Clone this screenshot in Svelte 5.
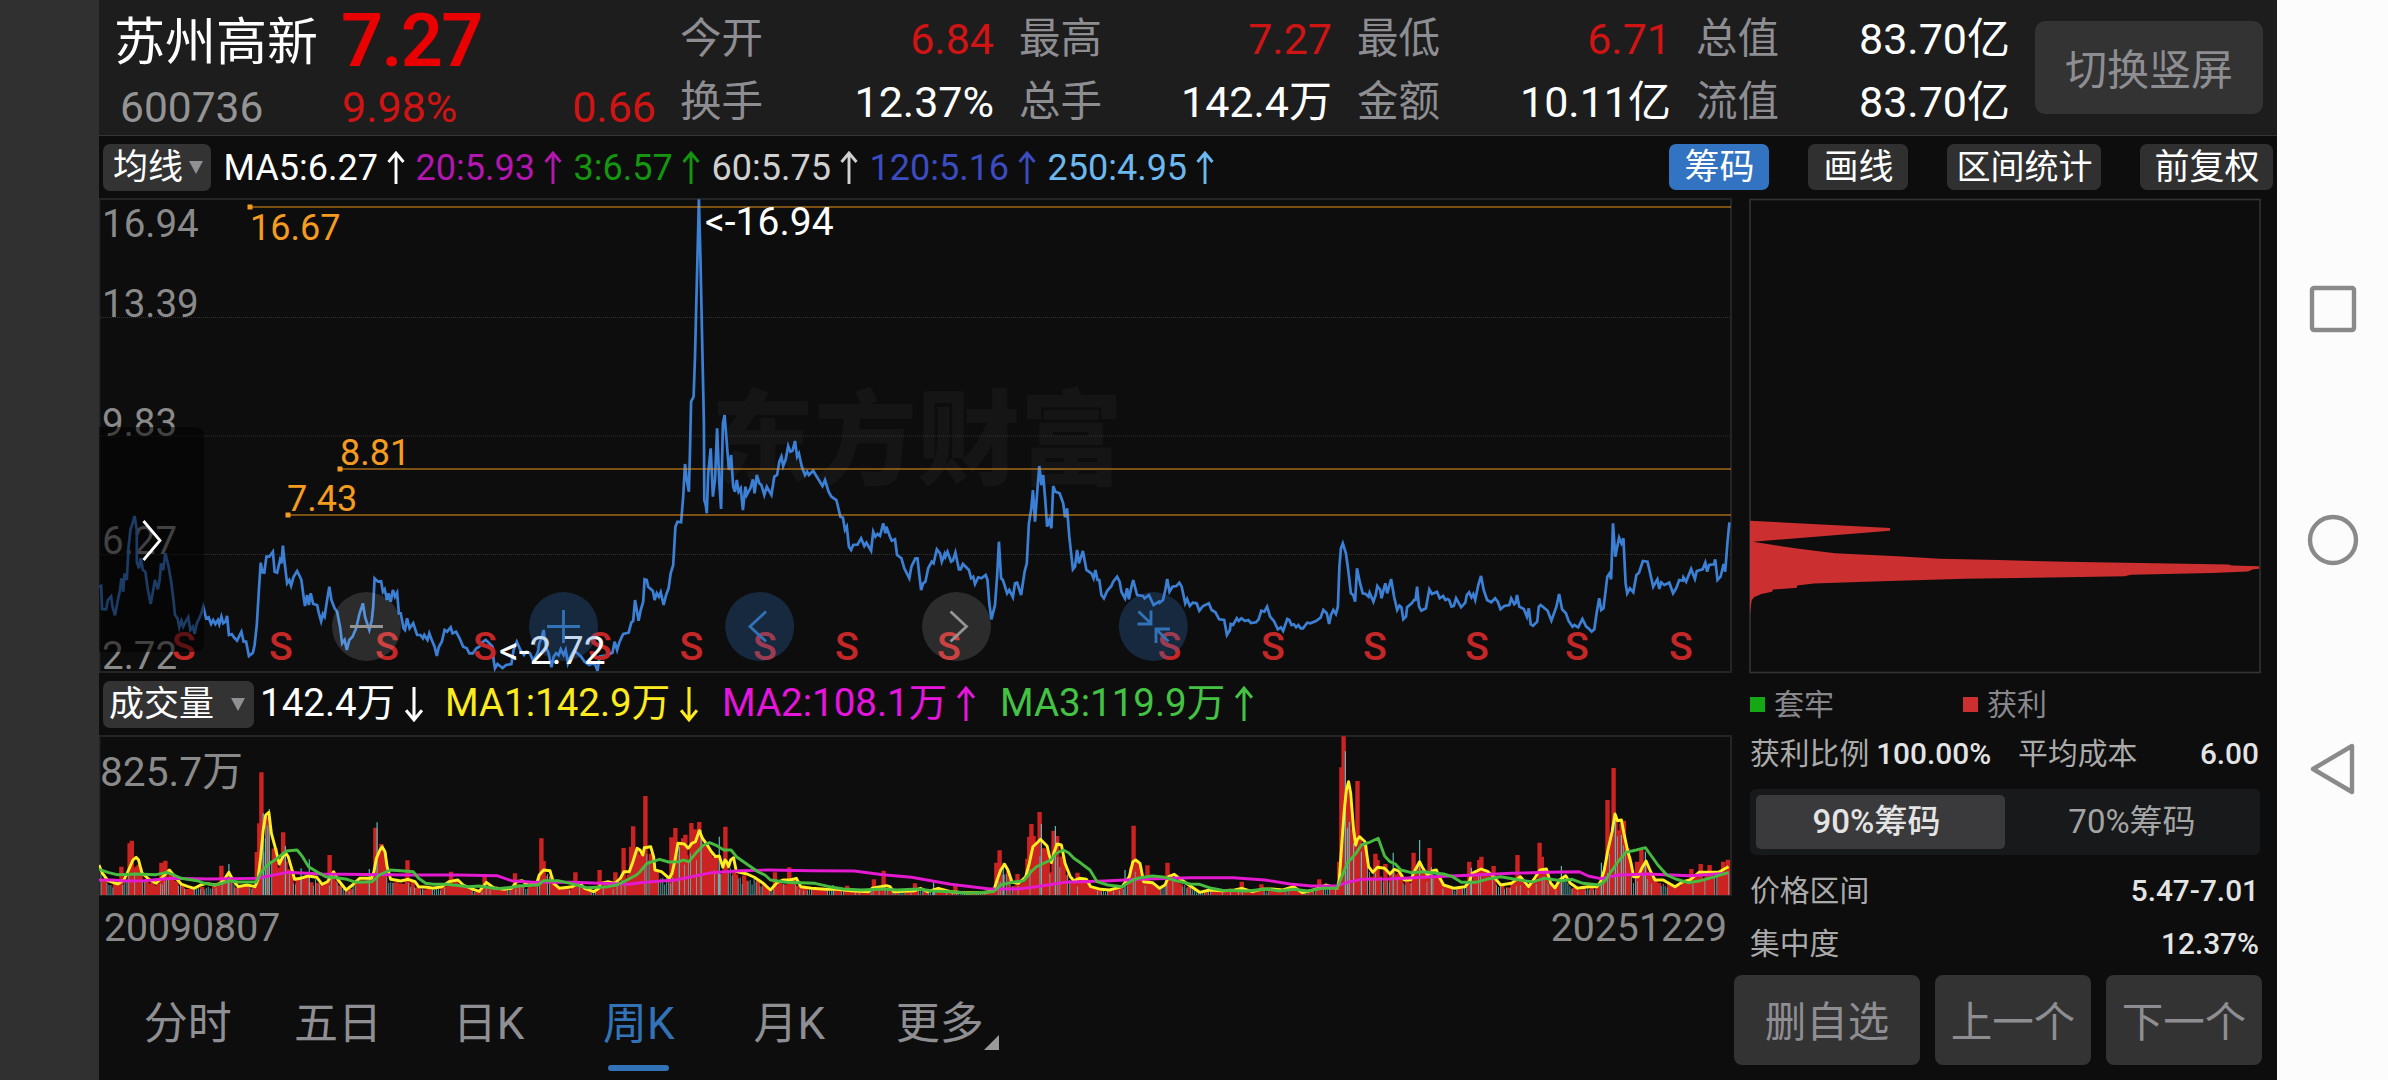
<script>
    const quotes = [
        { width: 312, items: [['今开', '6.84', 'up'], ['换手', '12.37%', '']] },
        { width: 311, items: [['最高', '7.27', 'up'], ['总手', '142.4万', '']] },
        { width: 312, items: [['最低', '6.71', 'up'], ['金额', '10.11亿', '']] },
        { width: 312, items: [['总值', '83.70亿', ''], ['流值', '83.70亿', '']] }
    ];

    const averages = [
        { text: 'MA5:6.27', color: '#ffffff', width: 192 },
        { text: '20:5.93', color: '#b416b0', width: 158 },
        { text: '3:6.57', color: '#14960f', width: 138 },
        { text: '60:5.75', color: '#d0d0d0', width: 158 },
        { text: '120:5.16', color: '#3b4bc0', width: 178 },
        { text: '250:4.95', color: '#6cb8ee', width: 178 }
    ];

    const volumeAverages = [
        { text: '142.4万', color: '#ffffff', width: 185, down: true },
        { text: 'MA1:142.9万', color: '#fdeb1e', width: 277, down: true },
        { text: 'MA2:108.1万', color: '#e515dc', width: 278 },
        { text: 'MA3:119.9万', color: '#44c244', width: 278 }
    ];

    const tabs = ['分时', '五日', '日K', '周K', '月K', '更多'];
    const activeTab = '周K';

    const sellMarks = [183.6, 281, 387, 485, 600, 691.4, 765, 847, 949, 1169.5, 1273, 1375, 1477, 1577, 1681];

    const levels = [
        { x: 250, y: 207, text: '16.67', tx: 250, ty: 240 },
        { x: 340, y: 469, text: '8.81', tx: 340, ty: 465 },
        { x: 288, y: 515, text: '7.43', tx: 287, ty: 511 }
    ];

    // Each block of points has its own origin and horizontal scale.
    function decode(text, ox, oy, sx) {
        return text.trim().split(/\s+/).map((pair) => {
            const [x, y] = pair.split(',').map(Number);
            return [+(ox + x / sx).toFixed(1), +(oy + y / 3).toFixed(1)];
        });
    }

    const toLine = (points) => points.map((p) => p.join(',')).join(' ');

    const price = [
        ...decode(`25,620 31,617 34,687 45,688 50,660 59,649 63,680 70,706 78,660 84,630 88,595 93,635 97,580 103,600 108,500 113,450 119,430 125,408 131,450
            131,545 137,565 142,535 148,570 155,575 162,630 170,672 177,630 182,600 190,628 195,600 199,550 205,570 211,520 220,560 228,610 234,665 238,705 245,715
            250,742 256,722 261,740 268,725 275,712 281,750 288,740 293,762 299,730 306,715 312,700 317,680 325,715 332,712 339,732 345,720 351,732 358,720 362,733
            368,710 373,730 379,725 384,708 389,765 397,762 403,772 412,782 418,768 424,755 430,785 437,785 445,828 456,818 461,795 467,735 473,630 478,548 483,577
            488,578 494,530 502,530 512,515 517,575 524,578 532,540 536,550 540,497 544,540 552,610 558,600 563,617 570,590 580,573 588,590 592,600 598,650 602,678
            608,645 613,675 618,640 625,672 636,675 641,700 647,724 652,702 657,710 664,660 670,620 676,660 685,685 692,695 700,740 706,790 713,780 719,810 726,780
            735,770 745,745 755,700 764,670 770,710 776,730 782,750 789,720 793,680 797,595 806,605 815,604 820,635 825,628 832,660 836,640 842,665 848,630 854,650
            860,638 865,700 870,700 878,745 882,750 888,715 895,745 905,730 916,765 925,765 932,775 936,765 945,780 950,760 957,780 965,800 971,828 977,800 985,785
            993,750 1000,755 1010,742 1015,760 1025,755 1035,775 1045,800 1055,805 1062,820 1072,820 1082,805 1090,800 1100,785 1108,780 1118,790 1127,800 1130,840
            1134,865 1141,852 1155,864 1165,855 1180,852 1186,810 1195,785 1205,810 1215,825 1222,815 1232,820 1240,840 1248,830 1254,815 1258,790 1264,775 1270,750
            1276,800 1284,820 1292,862 1298,830 1305,820 1312,826 1318,808 1326,825 1332,810 1338,850 1345,830 1355,812 1365,820 1375,830 1385,845 1398,855 1408,850
            1415,855 1421,872 1427,830`, 90, 380, 2.8),
        ...decode(`20,1395 35,1388 41,1355 48,1380 55,1355 65,1332 80,1328 88,1297 93,1293 98,1230 108,1292 114,1260 121,1235 125,1168 131,1170 135,1190 148,1203
            153,1230 159,1210 165,1220 170,1207 178,1245 185,1215 192,1195 198,1150 205,1125 211,1010 217,995 227,997 233,920 238,822 243,870 249,905 252,780 255,635
            262,620 266,500 270,330 277,28 281,200 287,500 291,700 292,930 296,945 299,970 303,850 310,775 316,920 322,870 328,715 334,880 339,957 344,700 349,675
            355,760 361,840 367,795 373,890 378,905 383,870 388,905 394,895 400,960 407,890 411,915 421,895 428,868 433,910 439,855 446,880 452,885 460,915 467,890
            480,915 488,860 496,855 502,815 508,800 513,828 520,808 527,768 533,785 539,782 546,753 552,800 557,790 565,830 574,855 580,845 585,855 597,842 607,860
            623,888 630,870 640,905 648,920 662,930 673,980 680,983 686,1020 691,1010 697,1070 703,1080 709,1065 721,1064 731,1045 740,1068 746,1058 759,1082 765,1025
            771,1040 777,1032 784,1038 793,1000 799,1030 802,1010 812,1040 817,1052 826,1048 832,1095 844,1105 852,1135 866,1165 872,1130 883,1105 889,1105 894,1155
            899,1200 905,1180 911,1175 919,1135 929,1115 934,1120 943,1078 952,1090 957,1115 965,1092 967,1100 973,1085 983,1115 988,1112 995,1088 1005,1138 1010,1138
            1016,1122 1033,1140 1039,1165 1045,1160 1050,1182 1059,1162 1068,1165 1080,1155 1085,1170 1090,1240 1096,1288 1106,1245 1112,1160 1117,1055 1123,1165
            1128,1170 1140,1210 1146,1200 1156,1222 1162,1180 1168,1178 1179,1215 1189,1145 1195,1120 1201,1000 1207,960 1212,900 1218,995 1224,910 1230,828 1236,885
            1241,855 1247,935 1252,1010 1258,990 1264,1015 1269,888 1275,905 1287,910 1297,940 1302,982 1308,955 1314,1040 1324,1138 1330,1130 1336,1080 1341,1120
            1352,1083 1362,1140 1376,1150 1382,1165 1387,1140 1393,1170 1398,1170 1404,1215 1411,1225 1420,1203 1432,1188 1437,1175 1448,1160 1455,1175 1460,1205
            1470,1225 1476,1195 1481,1228 1487,1195 1493,1170 1504,1215 1520,1218 1525,1225 1537,1215 1550,1245 1565,1235`, 600, 190, 2.8),
        ...decode(`51,548 60,540 66,510 71,477 77,515 85,500 95,498 103,488 109,500 118,550 123,537 130,558 138,548 148,550 155,572 165,558 180,550 187,570 197,577
            207,598 220,600 227,645 235,630 237,612 243,615 253,595 258,603 265,595 275,603 283,600 290,609 303,607 310,598 317,572 325,575 332,560 340,590 350,603
            360,628 368,622 374,633 385,597 390,600 396,615 402,613 408,622 414,615 420,625 426,625 437,608 445,610 460,603 472,593 479,570 488,580 494,612 499,585
            505,570 512,582 517,560 521,440 525,385 530,370 538,400 543,440 551,520 557,525 562,545 567,445 574,485 582,520 590,522 597,530 600,518 610,545 616,525
            620,498 628,510 631,535 641,490 646,520 656,477 664,530 672,570 678,557 683,562 688,598 695,590 698,562 710,550 716,540 720,540 724,500 729,560 735,572
            747,565 756,508 763,522 776,515 783,535 792,528 798,540 804,537 808,540 814,560 820,558 826,535 839,562 850,548 854,525 860,517 866,532 871,522 876,540
            884,495 891,468 898,510 907,540 918,547 928,535 935,545 942,568 952,558 965,555 970,535 978,553 982,548 985,525 991,560 1003,567 1011,590 1016,565
            1021,613 1027,617 1038,605 1042,560 1047,555 1065,572 1075,602 1088,560 1095,522 1103,568 1113,580 1120,603 1130,620 1135,615 1145,622 1156,597 1166,620
            1172,625 1180,635 1187,628 1193,580 1200,535 1205,570 1211,565 1221,470 1227,460 1231,478 1236,310 1242,410 1248,375 1252,353 1258,370 1263,355 1269,490
            1273,520 1280,505 1289,517 1297,465 1304,458 1314,423 1326,425 1332,455 1341,500 1352,478 1357,507 1362,487 1370,495 1383,488 1393,520 1402,503 1409,480
            1418,482 1420,472 1427,485 1440,447 1450,477 1455,453 1470,448 1477,428 1482,455 1487,435 1500,433 1503,418 1509,480 1517,470 1525,432 1529,455 1535,370
            1540,307`, 1140, 420, 2.613)
    ];

    const volume = (a, b, c) => [
        ...decode(a, 90, 670, 2.8),
        ...decode(b, 640, 670, 2.8),
        ...decode(c, 1190, 670, 2.8)
    ];

    const ma1 = volume(
        `25,585 35,610 50,632 78,642 95,630 108,600 120,570 129,562 136,570 145,608 165,628 185,640 200,625 222,600 238,620 255,642 275,650 292,655 310,645 325,640
            350,645 365,640 375,630 389,607 400,630 415,650 440,645 462,650 470,630 478,560 485,480 492,435 501,427 508,490 518,530 530,582 540,560 547,547 555,560
            563,590 573,628 590,625 610,618 635,622 650,643 665,635 682,605 695,630 717,660 735,645 755,625 788,625 795,605 802,565 812,540 818,530 826,545 832,590
            842,628 870,633 890,628 910,635 920,650 945,652 960,655 985,650 1005,635 1030,630 1045,645 1065,655 1090,664 1110,637 1130,653 1160,658 1180,655 1195,635
            1210,632 1225,645 1250,643 1258,615 1270,600 1288,602 1298,640 1315,655 1350,650 1370,638 1385,655 1410,665 1425,655 1430,640 1450,635 1470,640 1485,625
            1495,605 1510,605 1520,575 1532,535`,
        `0,540 8,555 12,533 30,530 38,560 42,600 60,605 82,625 90,610 98,570 106,520 124,522 135,535 145,520 155,515 166,482 175,505 185,520 200,545 212,560 222,558
            232,592 238,570 243,575 248,590 254,570 262,563 270,605 300,612 320,622 345,640 365,660 385,637 400,630 420,630 438,625 450,650 480,655 520,658 545,657
            590,662 640,665 650,655 690,647 700,650 710,665 770,662 785,655 805,665 835,655 870,665 910,668 960,668 990,662 1000,630 1010,600 1021,583 1030,600
            1042,637 1060,640 1080,620 1090,580 1100,530 1115,515 1121,508 1140,528 1147,560 1152,578 1160,545 1168,522 1180,525 1190,580 1205,620 1215,632 1230,625
            1250,628 1262,650 1290,658 1315,660 1350,650 1370,620 1380,575 1388,570 1400,580 1410,635 1435,638 1455,655 1470,645 1480,620 1496,613 1510,625 1530,640`,
        `27,667 55,660 90,662 125,660 145,655 175,665 200,658 230,657 260,660 290,650 315,668 345,660 380,645 412,655 418,630 425,520 432,420 438,360 444,335 450,370
            458,480 464,525 468,510 475,500 490,515 500,590 512,607 525,592 545,595 560,612 572,598 585,603 600,630 618,630 628,605 643,575 652,595 665,615 680,602
            690,600 700,625 710,645 740,655 770,650 782,635 790,610 815,597 835,605 850,620 870,645 900,640 925,620 948,650 965,625 980,600 998,597 1010,640 1022,654
            1035,630 1052,617 1065,640 1085,655 1115,650 1140,650 1150,635 1160,600 1170,540 1182,485 1190,432 1197,452 1208,450 1215,490 1225,540 1235,580 1242,620
            1255,620 1265,595 1277,573 1290,605 1302,630 1325,630 1358,650 1380,635 1400,630 1425,607 1480,607 1500,595 1508,590`
    );

    const ma3 = volume(
        `25,598 50,607 75,614 130,612 185,614 215,607 235,615 255,625 300,632 320,640 350,645 370,640 390,632 415,636 465,636 480,605 500,582 515,572 530,560 550,543
            580,540 595,560 612,590 635,605 660,620 690,623 720,628 745,637 790,635 810,615 840,600 870,602 905,605 920,625 940,640 960,643 1000,643 1060,650 1090,648
            1140,656 1180,652 1200,648 1255,645 1270,632 1310,632 1345,640 1390,653 1420,652 1450,650 1475,645 1500,632 1530,615`,
        `0,605 20,580 55,568 80,576 110,575 120,570 137,575 160,545 178,525 195,518 215,527 235,540 255,540 270,560 300,583 330,605 350,615 365,630 410,637 450,638
            490,640 530,650 570,657 620,660 680,657 720,660 780,657 820,663 870,665 920,670 990,665 1010,645 1040,637 1075,632 1095,605 1110,590 1150,570 1165,550
            1185,540 1200,548 1215,565 1235,580 1260,600 1280,635 1310,645 1350,650 1380,630 1400,623 1435,618 1470,622 1500,632 1540,642`,
        `27,643 60,655 90,661 160,663 215,657 250,663 290,658 330,663 370,655 412,655 425,620 440,580 465,550 480,525 500,518 527,505 545,558 560,575 575,582 590,600
            620,608 650,605 680,608 710,612 735,620 760,637 800,637 830,628 870,620 910,628 960,636 990,625 1040,632 1070,628 1100,640 1145,645 1160,635 1175,612
            1195,580 1220,547 1250,540 1275,533 1290,555 1310,585 1335,615 1360,627 1395,638 1430,632 1470,620 1508,607`
    );

    const ma2 = volume(
        `25,630 60,630 100,633 150,632 230,625 330,627 470,625 550,607 650,612 900,615 1030,615 1140,617 1180,632 1240,637 1350,637 1430,640 1510,643`,
        `0,638 60,633 100,630 200,608 280,602 360,600 480,602 600,603 680,614 760,622 870,643 980,657 1060,657 1110,650 1190,637 1300,633 1400,628 1540,623`,
        `120,623 210,630 280,642 340,648 412,648 440,637 480,628 560,627 680,620 800,615 900,610 1000,607 1090,605 1115,618 1150,626 1200,615 1280,612 1400,617 1508,610`
    );

    const upSpikes = volume(
        `88,590 111,520 117,512 200,578 211,572 368,587 467,546 474,460 480,307 497,440 515,540 541,487 671,555 799,473 816,522 889,571 1011,605 1105,620 1190,610
            1264,505 1270,573 1359,607 1427,600 1471,607 1494,534 1515,530 1521,469 1545,550 1555,378`,
        `88,502 99,474 121,505 127,494 144,459 155,478 166,456 239,470 378,607 418,592 580,647 655,628 682,602 770,640 883,648 998,578 1007,541 1057,612 1085,566
            1090,500 1096,462 1102,498 1119,426 1130,535 1158,482 1168,498 1225,608 1382,467 1421,586 1477,578`,
        `145,635 200,643 362,628 418,575 424,292 430,199 469,333 475,498 519,551 525,570 547,582 626,548 671,534 782,575 810,570 816,560 850,588 917,555 979,518
            985,560 1169,390 1186,294 1197,488 1203,492 1215,452 1252,575 1264,540 1404,597 1430,582 1455,585 1493,575 1506,569`
    );

    const downSpikes = volume(
        `389,582 485,430 491,505 502,417 547,528 591,595 614,568 782,597 804,457`,
        `110,530 171,480 222,500 541,645 822,637 1017,578 1124,462 1163,468 1358,600`,
        `435,244 441,474 446,456 458,520 480,545 569,548 643,510 676,592 788,593 1040,588 1152,578 1191,450 1208,495 1275,545`
    );

    const base = 895;

    function levelAt(x) {
        const i = ma1.findIndex((p) => p[0] >= x);
        if (i <= 0) return ma1[i < 0 ? ma1.length - 1 : 0][1];
        const [a, b] = [ma1[i - 1], ma1[i]];
        return a[1] + ((b[1] - a[1]) * (x - a[0])) / (b[0] - a[0] || 1);
    }

    function buildBars() {
        let seed = 7;
        let rising = true;
        const random = () => (seed = (seed * 16807) % 2147483647) / 2147483647;
        const bars = [];
        for (let x = 101; x < 1730; x += 1.985) {
            if (random() < (rising ? 0.34 : 0.55)) rising = !rising;
            const h = Math.max(2, (base - levelAt(x)) * (rising ? 0.65 + random() * 0.4 : 0.5 + random() * 0.4));
            bars.push({ x, h, rising });
        }
        return bars;
    }

    const bars = buildBars();
    const column = (x, top, w) => `M${(x - w / 2).toFixed(1)} ${base}V${top.toFixed(1)}h${w}V${base}z`;
    const upBars = bars.filter((b) => b.rising).map((b) => column(b.x, base - b.h, 4.2)).join('')
        + upSpikes.map(([x, y]) => column(x, y, 4.4)).join('');
    const downBars = bars.filter((b) => !b.rising).map((b) => column(b.x, base - b.h, 0.8)).join('')
        + downSpikes.map(([x, y]) => column(x, y, 1.2)).join('');
</script>

{#snippet arrow(down)}
    <svg class="arrow" viewBox="0 0 18 34">
        <path d={down ? 'M9 1V32M1.5 23L9 32L16.5 23' : 'M9 33V2M1.5 11L9 2L16.5 11'} />
    </svg>
{/snippet}

<div class="screen">
    <div class="edge"></div>

    <main>
        <header>
            <div class="stock">
                <div class="name">苏州高新</div>
                <div class="code">600736</div>
            </div>
            <div class="last">
                <div class="price">7.27</div>
                <div class="change"><span>9.98%</span><span>0.66</span></div>
            </div>
            <div class="quotes">
                {#each quotes as group}
                    <div class="quote" style="width: {group.width}px">
                        {#each group.items as [label, value, tone]}
                            <div class="quote-row"><span class="label">{label}</span><span class={tone}>{value}</span></div>
                        {/each}
                    </div>
                {/each}
            </div>
            <button class="rotate">切换竖屏</button>
        </header>

        <div class="toolbar">
            <button class="select">均线<i></i></button>
            <div class="averages">
                {#each averages as item}
                    <span class="average" style="color: {item.color}; width: {item.width}px">{item.text}{@render arrow(false)}</span>
                {/each}
            </div>
            <div class="tools">
                <button class="tool on">筹码</button>
                <button class="tool">画线</button>
                <button class="tool range">区间统计</button>
                <button class="tool adjust">前复权</button>
            </div>
        </div>

        <div class="content">
            <section class="charts">
                <svg class="kline" viewBox="99 198 1635 476">
                    <text class="watermark" x="711" y="477" textLength="412">东方财富</text>
                    <rect class="frame" x="99.5" y="199" width="1631.5" height="473" />
                    {#each [317.5, 436, 554.5] as y}
                        <line class="grid" x1="99" x2="1731" y1={y} y2={y} />
                    {/each}
                    <g class="axis">
                        <text x="102" y="237">16.94</text>
                        <text x="102" y="317">13.39</text>
                        <text x="102" y="436">9.83</text>
                        <text x="102" y="554">6.27</text>
                        <text x="102" y="669">2.72</text>
                    </g>
                    <polyline class="price-line" points={toLine(price)} />
                    {#each levels as level}
                        <line class="level" x1={level.x} x2="1731" y1={level.y} y2={level.y} />
                        <rect class="level-dot" x={level.x - 2.5} y={level.y - 2.5} width="5" height="5" />
                        <text class="level-text" x={level.tx} y={level.ty}>{level.text}</text>
                    {/each}
                    {#each sellMarks as x}
                        <text class="sell" {x} y="660">S</text>
                    {/each}
                    <g class="extreme">
                        <text x="705" y="235">&lt;-16.94</text>
                        <text x="499" y="664">&lt;-2.72</text>
                    </g>

                    <path class="drawer" d="M99 427h96q9 0 9 9v207q0 9-9 9H99z" />
                    <path class="drawer-icon" d="M143.5 521L160 540.5L143.5 560" />

                    <g class="pad gray"><circle cx="366.5" cy="626.5" r="34.5" /><path d="M350 626.5h33" /></g>
                    <g class="pad blue"><circle cx="563.5" cy="626.5" r="34.5" /><path d="M547 626.5h33M563.5 610v33" /></g>
                    <g class="pad blue"><circle cx="759.7" cy="626.5" r="34.5" /><path d="M766 611.5L750 626.5L766 641.5" /></g>
                    <g class="pad gray"><circle cx="956.5" cy="626.5" r="34.5" /><path d="M950.5 611.5L966.5 626.5L950.5 641.5" /></g>
                    <g class="pad blue">
                        <circle cx="1153.3" cy="626.5" r="34.5" />
                        <path d="M1138.5 611.5L1151 623.5M1151 610.5V624H1137.5M1168.5 641.5L1156 629M1156 643V629H1170" />
                    </g>
                </svg>

                <div class="volume-bar">
                    <button class="select wide">成交量<i></i></button>
                    {#each volumeAverages as item}
                        <span class="average" style="color: {item.color}; width: {item.width}px"><span class="value">{item.text}</span>{@render arrow(item.down)}</span>
                    {/each}
                </div>

                <svg class="volume" viewBox="99 735 1635 162">
                    <rect class="frame" x="99.5" y="736" width="1631.5" height="159" />
                    <text class="volume-max" x="100" y="786">825.7万</text>
                    <path class="up-bars" d={upBars} />
                    <path class="down-bars" d={downBars} />
                    <polyline points={toLine(ma1)} stroke="#ffee22" />
                    <polyline points={toLine(ma2)} stroke="#e31ad0" />
                    <polyline points={toLine(ma3)} stroke="#46bb40" />
                </svg>

                <div class="dates"><span>20090807</span><span>20251229</span></div>
            </section>

            <section class="chips">
                <svg class="distribution" viewBox="1749 198 512 476">
                    <rect class="chip-frame" x="1750" y="199.5" width="510" height="473" />
                    <path
                        d="M1750 520.7L1890 528.1V530.7L1753 541.8L1772 544.8L1797 548.5L1835 553.3L1898 556.2L1940 558.8L1998.5 560L2066 561.8L2229 564.4L2231.5 565.5L2259 566.2V568.8L2252.5 569.6L2248 571.4L2212.5 572.9L2131 574.7L2124.5 576.2L2066 577.3L1965 578.8L1889.5 581L1814 583.6L1797 585.5V587.7L1773 589.5L1772 591.7L1761.5 594L1754.3 597L1751.8 600L1751 605L1750 615z"
                    />
                </svg>
                <div class="legend">
                    <span><i class="loss"></i>套牢</span>
                    <span><i class="gain"></i>获利</span>
                </div>
                <div class="stat split">
                    <span>获利比例</span><b>100.00%</b>
                    <span class="cost">平均成本</span><b class="end">6.00</b>
                </div>
                <div class="segments">
                    <button class="active">90%筹码</button>
                    <button>70%筹码</button>
                </div>
                <div class="stat"><span>价格区间</span><b>5.47-7.01</b></div>
                <div class="stat"><span>集中度</span><b>12.37%</b></div>
            </section>
        </div>

        <footer>
            <nav class="tabs">
                {#each tabs as tab}
                    <button class:active={tab === activeTab}>
                        {tab}
                        {#if tab === '更多'}<i class="corner"></i>{/if}
                    </button>
                {/each}
            </nav>
            <div class="actions">
                <button class="remove">删自选</button>
                <button>上一个</button>
                <button>下一个</button>
            </div>
        </footer>
    </main>

    <aside class="system">
        <svg viewBox="0 0 111 1080">
            <rect x="35" y="288" width="42" height="42" rx="2" />
            <circle cx="56" cy="540" r="23" />
            <path d="M36 769L75 746V792Z" />
        </svg>
    </aside>
</div>

<style>
    :global(body) {
        background: #0d0d0d;
    }

    .screen {
        display: flex;
        width: 2388px;
        height: 1080px;
        overflow: hidden;
        background: #0d0d0d;
        color: #fff;
        font-family: Roboto, "Noto Sans CJK SC", sans-serif;
    }

    button {
        border: 0;
        padding: 0;
        background: none;
        color: inherit;
        font: inherit;
        white-space: nowrap;
    }

    .edge {
        width: 99px;
        background: #303030;
    }

    main {
        width: 2178px;
        display: flex;
        flex-direction: column;
    }

    header {
        display: flex;
        box-sizing: border-box;
        height: 136px;
        background: #1d1d1d;
        border-bottom: 1px solid #343434;
    }

    .stock {
        width: 242px;
        padding-left: 15px;
        box-sizing: border-box;
    }

    .name {
        margin-top: 7px;
        font-size: 51px;
        line-height: 72px;
        white-space: nowrap;
    }

    .code {
        margin-top: 2px;
        padding-left: 6px;
        color: #949494;
        font-size: 42.5px;
        line-height: 54px;
    }

    .last {
        width: 314px;
        color: #e90000;
    }

    .price {
        height: 81px;
        font-size: 74px;
        line-height: 82px;
        font-weight: 600;
        letter-spacing: -1.8px;
    }

    .change {
        display: flex;
        justify-content: space-between;
        margin: -1px -1px 0 1px;
        color: #d01414;
        font-size: 43px;
        line-height: 54px;
    }

    .quotes {
        display: flex;
        gap: 27px;
        width: 1353px;
        padding-left: 25px;
        box-sizing: border-box;
    }

    .quote {
        padding-top: 8px;
        font-size: 43px;
    }

    .quote-row {
        display: flex;
        justify-content: space-between;
        height: 63px;
        margin-right: -2px;
        line-height: 62px;
    }

    .label {
        color: #8e8e92;
        font-size: 41.5px;
    }

    .up {
        color: #d01414;
    }

    .rotate {
        width: 228px;
        height: 93px;
        margin: 21px 0 0 27px;
        padding-bottom: 2px;
        border-radius: 10px;
        background: #333;
        color: #8e8e92;
        font-size: 42px;
    }

    .toolbar {
        display: flex;
        align-items: center;
        height: 62px;
        padding-left: 4px;
    }

    .select {
        display: flex;
        align-items: center;
        justify-content: space-between;
        width: 108px;
        height: 47px;
        box-sizing: border-box;
        padding: 1px 8px 0 10px;
        border-radius: 7px;
        background: #333;
        font-size: 35px;
        line-height: 47px;
    }

    .select i {
        border: 7.5px solid transparent;
        border-top: 13px solid #8f8f94;
        border-bottom: 0;
    }

    .averages {
        display: flex;
        flex: 1;
        margin-left: 12.5px;
        padding-top: 2px;
        font-size: 36px;
    }

    .average {
        display: flex;
        align-items: center;
        gap: 9px;
        white-space: nowrap;
        line-height: 50px;
    }

    .arrow {
        width: 18px;
        height: 34px;
        fill: none;
        stroke: currentColor;
        stroke-width: 2.9;
    }

    .tools {
        display: flex;
        padding-right: 4px;
    }

    .tool {
        width: 100px;
        height: 46px;
        margin-left: 39px;
        padding: 1px 0 0 1px;
        border-radius: 7px;
        background: #303030;
        font-size: 35px;
        line-height: 45px;
    }

    .tool.on {
        background: #3273c2;
    }

    .tool.range {
        width: 154px;
        font-size: 34px;
    }

    .tool.adjust {
        width: 133px;
    }

    .content {
        display: flex;
        height: 762px;
    }

    .charts {
        width: 1650px;
    }

    .charts svg {
        display: block;
    }

    .kline {
        width: 1635px;
        height: 476px;
    }

    .watermark {
        fill: #151515;
        font-family: "Noto Sans CJK SC", sans-serif;
        font-size: 103px;
        font-weight: 900;
    }

    .frame {
        fill: none;
        stroke: #242424;
        stroke-width: 2;
    }

    .grid {
        stroke: #333;
        stroke-dasharray: 1 1;
    }

    .axis text {
        fill: #8a8a8a;
        font-size: 38.5px;
    }

    .price-line {
        fill: none;
        stroke: #3c80d6;
        stroke-width: 2.7;
    }

    .level {
        stroke: #f59b20;
        stroke-opacity: 0.48;
        stroke-width: 2;
    }

    .level-dot {
        fill: #f59b20;
    }

    .level-text {
        fill: #f59b20;
        font-size: 36px;
    }

    .sell {
        fill: #c42727;
        font-size: 39.5px;
        font-weight: 500;
        text-anchor: middle;
    }

    .extreme text {
        fill: #fff;
        font-size: 39px;
    }

    .drawer {
        fill: #000;
        fill-opacity: 0.53;
    }

    .drawer-icon {
        fill: none;
        stroke: #fff;
        stroke-width: 2.8;
    }

    .pad path {
        fill: none;
        stroke-width: 2.8;
    }

    .gray circle {
        fill: #fff;
        fill-opacity: 0.13;
    }

    .gray path {
        stroke: #959595;
    }

    .blue circle {
        fill: #3273c2;
        fill-opacity: 0.28;
    }

    .blue path {
        stroke: #3273b8;
    }

    .volume-bar {
        display: flex;
        align-items: center;
        height: 61px;
        padding-left: 4px;
        font-size: 38.5px;
    }

    .volume-bar .value {
        margin-left: -1px;
        height: 54px;
    }

    .select.wide {
        width: 151px;
        margin-right: 7px;
        padding: 0 9px 0 6px;
    }

    .volume-bar .arrow {
        width: 20px;
        height: 36px;
        margin-top: -1px;
    }

    .volume {
        width: 1635px;
        height: 162px;
    }

    .volume-max {
        fill: #8a8a8a;
        font-size: 40.7px;
    }

    .up-bars {
        fill: #cb2222;
    }

    .down-bars {
        fill: #5fb7b8;
    }

    .volume polyline {
        fill: none;
        stroke-width: 2.9;
        stroke-linejoin: round;
    }

    .dates {
        display: flex;
        justify-content: space-between;
        width: 1628px;
        padding: 6px 0 0 5px;
        box-sizing: border-box;
        color: #8a8a8a;
        font-size: 39.2px;
        line-height: 50px;
    }

    .chips {
        width: 512px;
    }

    .distribution {
        display: block;
        width: 512px;
        height: 476px;
        fill: #cb2f2f;
    }

    .chip-frame {
        fill: none;
        stroke: #333;
        stroke-width: 1.6;
    }

    .legend {
        display: flex;
        height: 61px;
        color: #88888c;
        font-size: 30px;
        line-height: 61px;
    }

    .legend span {
        display: flex;
        align-items: center;
        gap: 9px;
        width: 213px;
    }

    .legend i {
        width: 15px;
        height: 15px;
        margin-left: 1px;
    }

    .loss {
        background: #14a914;
    }

    .gain {
        background: #cb2f2f;
    }

    .stat {
        display: flex;
        justify-content: space-between;
        height: 53px;
        padding: 0 2px 0 1px;
        font-size: 29.8px;
        line-height: 53px;
        color: #aaa;
    }

    .stat b {
        color: #e4e4e4;
        font-weight: 500;
    }

    .stat.split {
        height: 54px;
        justify-content: flex-start;
        line-height: 38px;
    }

    .split b {
        margin-left: 7px;
    }

    .split .cost {
        margin-left: 27px;
    }

    .split .end {
        margin-left: auto;
    }

    .segments {
        display: flex;
        height: 66px;
        margin: 0 1px 9px;
        padding: 6px;
        box-sizing: border-box;
        border-radius: 6px;
        background: #18191b;
    }

    .segments button {
        width: 249px;
        padding-left: 5px;
        box-sizing: border-box;
        border-radius: 5px;
        color: #a4a4a4;
        font-size: 33px;
        line-height: 54px;
    }

    .segments .active {
        padding: 0 8px 0 0;
        background: #3a3a3c;
        color: #e4e4e4;
        font-weight: 500;
    }

    footer {
        display: flex;
        justify-content: space-between;
        height: 120px;
    }

    .tabs {
        display: flex;
        padding-left: 14px;
    }

    .tabs button {
        position: relative;
        width: 150.4px;
        padding: 7px 1px 0 0;
        box-sizing: border-box;
        color: #8f8f93;
        font-size: 44px;
        line-height: 64px;
    }

    .tabs .active {
        color: #3273b8;
    }

    .tabs .active::after {
        content: "";
        position: absolute;
        left: 44px;
        bottom: 9px;
        width: 61px;
        height: 6px;
        border-radius: 3px;
        background: #3273b8;
    }

    .corner {
        position: absolute;
        right: 16px;
        bottom: 30px;
        border-left: 15px solid transparent;
        border-bottom: 15px solid #9a9a9a;
    }

    .actions {
        display: flex;
        gap: 15px;
        padding: 15px 15px 0 0;
    }

    .actions button {
        width: 156px;
        height: 90px;
        padding-bottom: 2px;
        border-radius: 8px;
        background: #333;
        color: #8e8e92;
        font-size: 41.5px;
    }

    .actions .remove {
        width: 186px;
    }

    .system {
        width: 111px;
        background: #fcfcfc;
    }

    .system svg {
        display: block;
        width: 111px;
        height: 1080px;
        fill: none;
        stroke: #8a8a8a;
        stroke-width: 4.4;
        stroke-linejoin: round;
    }
</style>
